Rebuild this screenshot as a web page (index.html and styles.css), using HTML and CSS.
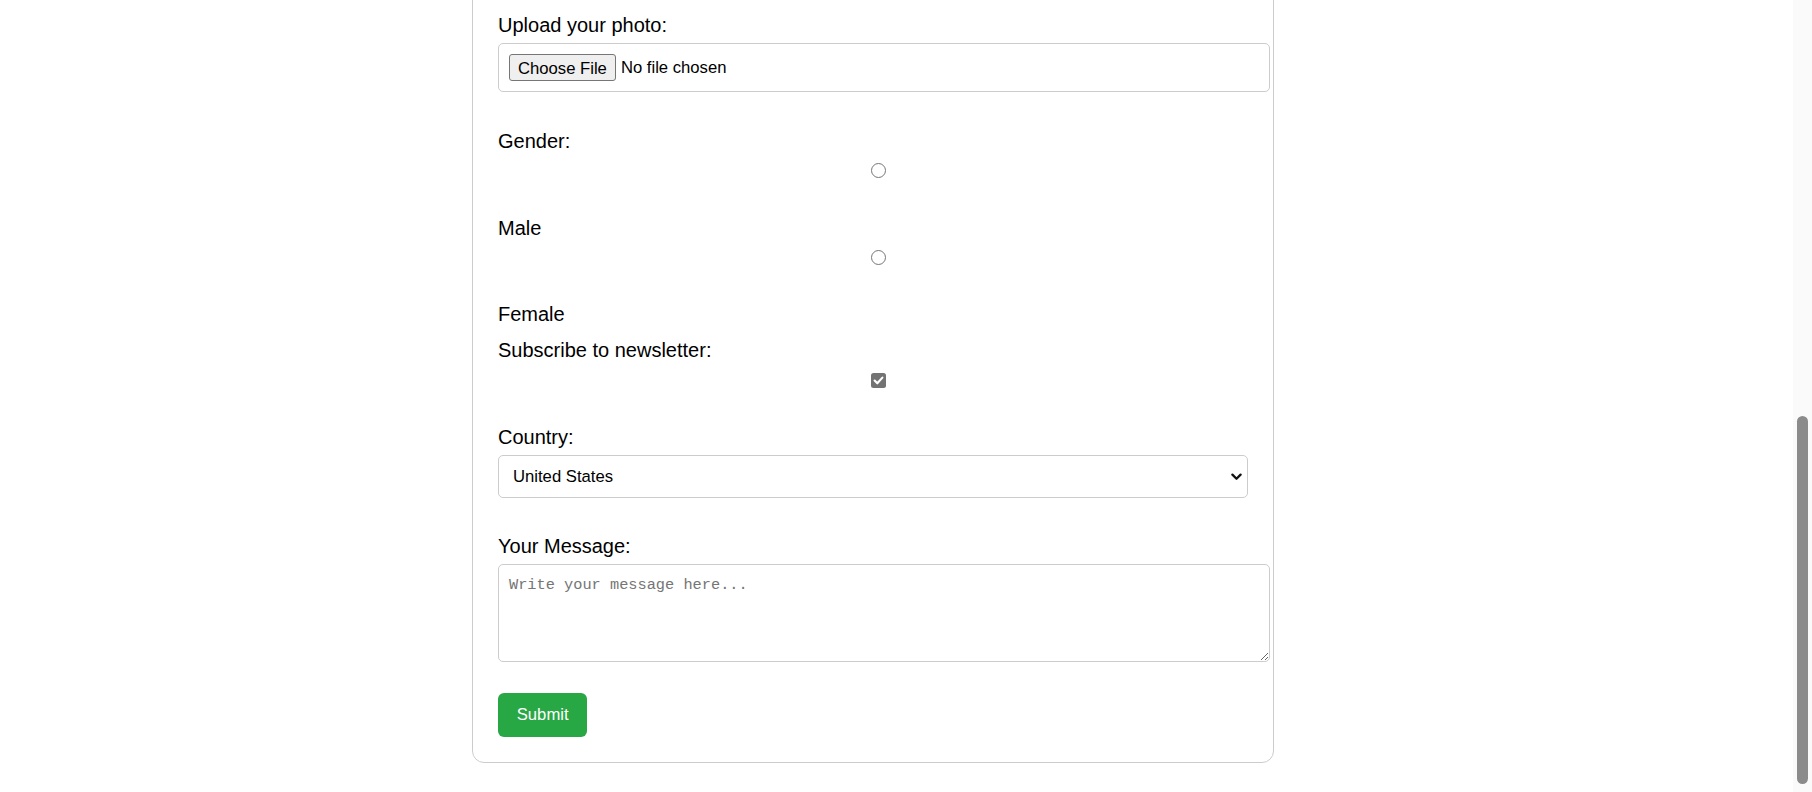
FILE: index.html
```html
<!DOCTYPE html>
<html lang="en">
<head>
<meta charset="utf-8">
<title>Registration Form</title>
<link rel="stylesheet" href="styles.css">
</head>
<body>
<div class="viewport">
  <main class="page">
    <form class="card" action="#">
      <div class="field field-file">
        <label class="label" for="photo">Upload your photo:</label>
        <input class="file-input" id="photo" type="file">
      </div>

      <div class="field field-gender">
        <div class="label">Gender:</div>
        <div class="choice-row"><input class="radio" type="radio" name="gender" id="male" value="male"></div>
        <label class="label" for="male">Male</label>
        <div class="choice-row"><input class="radio" type="radio" name="gender" id="female" value="female"></div>
        <label class="label" for="female">Female</label>
      </div>

      <div class="field field-check">
        <label class="label" for="newsletter">Subscribe to newsletter:</label>
        <div class="choice-row choice-row-check">
          <span class="check">
            <input class="checkbox" type="checkbox" id="newsletter" checked>
            <svg class="check-mark" viewBox="0 0 15 15" aria-hidden="true"><path d="M3.6 7.6 L6.3 10.3 L11.4 4.6" fill="none" stroke="#fff" stroke-width="2.1" stroke-linecap="round" stroke-linejoin="round"/></svg>
          </span>
        </div>
      </div>

      <div class="field field-select">
        <label class="label" for="country">Country:</label>
        <div class="select-wrap">
          <select class="select" id="country">
            <option>United States</option>
            <option>Canada</option>
            <option>United Kingdom</option>
            <option>Australia</option>
          </select>
          <svg class="select-arrow" viewBox="0 0 11 8" aria-hidden="true"><path d="M1.4 1.6 L5.5 5.7 L9.6 1.6" fill="none" stroke="#111" stroke-width="2.3" stroke-linecap="round" stroke-linejoin="round"/></svg>
        </div>
      </div>

      <div class="field field-message">
        <label class="label" for="message">Your Message:</label>
        <textarea class="textarea" id="message" placeholder="Write your message here..."></textarea>
      </div>

      <button class="submit" type="submit">Submit</button>
    </form>
  </main>
</div>
<div class="scrollbar" aria-hidden="true"><div class="scrollbar-thumb"></div></div>
</body>
</html>
```
FILE: styles.css
```css
* {
  box-sizing: border-box;
}

html,
body {
  margin: 0;
  height: 100%;
  overflow: hidden;
}

body {
  display: flex;
  font-family: "Liberation Sans", Arial, sans-serif;
  color: #000;
  background: #fff;
}

.viewport {
  flex: 1;
  min-width: 0;
  height: 100vh;
  overflow: hidden;
  display: flex;
  flex-direction: column-reverse;
}

.scrollbar {
  flex: none;
  width: 19px;
  height: 100vh;
  padding-top: 416px;
  background: #fafafa;
}

.scrollbar-thumb {
  width: 11px;
  height: 368px;
  margin-left: 4px;
  border-radius: 5.5px;
  background: #8b8b8b;
}

.page {
  flex: none;
  padding: 0 0 29px 472px;
}

.card {
  width: 802px;
  border: 1px solid #ccc;
  border-radius: 12px;
  padding: 25px;
}

.field {
  margin-bottom: 36.5px;
}

.label {
  display: block;
  font-size: 20px;
  line-height: 23px;
  margin-bottom: 6px;
}

.field-file {
  margin-bottom: 38.5px;
}

.file-input {
  display: block;
  width: calc(100% + 22px);
  height: 49px;
  padding: 10px;
  border: 1px solid #ccc;
  border-radius: 5px;
  font-family: "Liberation Sans", Arial, sans-serif;
  font-size: 16.67px;
  line-height: 27px;
  color: #000;
}

.file-input::file-selector-button {
  height: 27px;
  padding: 0 8px;
  margin: 0 5px 0 0;
  border: 1px solid #767676;
  border-radius: 3px;
  background: #efefef;
  color: #000;
  font: inherit;
  vertical-align: top;
}

.choice-row {
  display: flex;
  justify-content: center;
  padding: 4px 0 0 10px;
  margin-bottom: 38.5px;
}

.field-gender {
  margin-bottom: 13px;
}

.radio {
  appearance: none;
  width: 15px;
  height: 15px;
  margin: 0;
  border: 1px solid #767676;
  border-radius: 50%;
  background: #fff;
}

.field-check {
  margin-bottom: 38px;
}

.choice-row-check {
  padding-top: 4.5px;
  margin-bottom: 0;
}

.check {
  position: relative;
  display: block;
  width: 15px;
  height: 15px;
}

.checkbox {
  appearance: none;
  display: block;
  width: 15px;
  height: 15px;
  margin: 0;
  border-radius: 2.5px;
  background: #737373;
}

.check-mark {
  position: absolute;
  left: 0;
  top: 0;
  width: 15px;
  height: 15px;
  pointer-events: none;
}

.field-select {
  margin-bottom: 37.5px;
}

.select-wrap {
  position: relative;
  width: 100%;
}

.select {
  appearance: none;
  display: block;
  width: 100%;
  height: 43px;
  padding: 0 30px 0 14px;
  border: 1px solid #ccc;
  border-radius: 5px;
  background: #fff;
  color: #000;
  font: 16.67px "Liberation Sans", Arial, sans-serif;
}

.select-arrow {
  position: absolute;
  right: 6px;
  top: 50%;
  width: 11px;
  height: 8px;
  margin-top: -3.5px;
  pointer-events: none;
}

.field-message {
  margin-bottom: 31px;
}

.textarea {
  display: block;
  width: calc(100% + 22px);
  height: 98px;
  padding: 10px;
  border: 1px solid #ccc;
  border-radius: 5px;
  font: 15.3px/21px "Liberation Mono", "DejaVu Sans Mono", monospace;
  color: #000;
}

.textarea::placeholder {
  color: #757575;
}

.submit {
  display: block;
  height: 44px;
  padding: 0 18.75px;
  border: none;
  border-radius: 6px;
  background: #28a745;
  color: #fff;
  font: 16.67px "Liberation Sans", Arial, sans-serif;
}
```
